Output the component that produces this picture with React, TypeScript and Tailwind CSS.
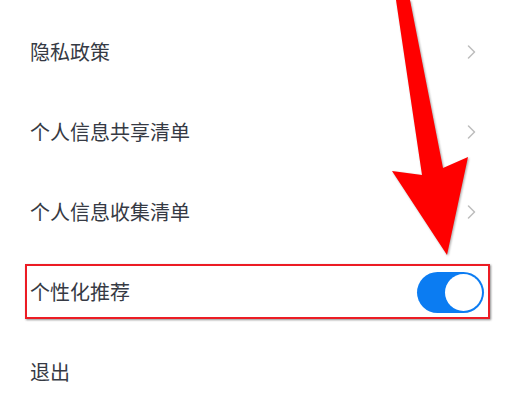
const ROWS = [
  { label: "隐私政策", kind: "link" },
  { label: "个人信息共享清单", kind: "link" },
  { label: "个人信息收集清单", kind: "link" },
  { label: "个性化推荐", kind: "toggle" },
  { label: "退出", kind: "plain" },
];

function Chevron() {
  return (
    <svg width="9" height="14" viewBox="0 0 9 14" fill="none">
      <polyline
        points="1.5,1 7.5,7 1.5,13"
        stroke="#bdbdbd"
        strokeWidth="1.5"
        strokeLinecap="round"
        strokeLinejoin="round"
      />
    </svg>
  );
}

function Toggle() {
  return (
    <div className="w-[67px] h-[41px] rounded-full bg-[#0b7cf2] flex items-center justify-end pr-[2px]">
      <div className="w-[37px] h-[37px] rounded-full bg-white" />
    </div>
  );
}

export default function App() {
  return (
    <div
      className="relative w-[517px] h-[393px] overflow-hidden bg-white"
      style={{ fontFamily: '"Noto Sans CJK SC", "Noto Sans", sans-serif' }}
    >
      <div className="flex flex-col pt-[12px]">
        {ROWS.map((row) => (
          <div
            key={row.label}
            className={
              row.kind === "toggle"
                ? "relative h-[80px] flex items-center justify-between pl-[30px] pr-[33px]"
                : "relative h-[80px] flex items-center justify-between pl-[30px] pr-[41px]"
            }
          >
            <span className="text-[20px] leading-none text-[#363a44]">{row.label}</span>
            {row.kind === "link" && <Chevron />}
            {row.kind === "toggle" && <Toggle />}
            {row.kind === "toggle" && (
              <div className="absolute left-[25px] right-[27px] top-[12px] h-[55px] border-2 border-[#ec1c24] shadow-[1px_1px_2px_rgba(0,0,0,0.45)]" />
            )}
          </div>
        ))}
      </div>

      {/* annotation arrow */}
      <svg
        className="absolute inset-0 drop-shadow-[1px_1px_1px_rgba(0,0,0,0.35)]"
        width="517"
        height="393"
        viewBox="0 0 517 393"
      >
        <polygon
          points="396,0 410,0 443,168 468,157 447,255 392,171 422,175"
          fill="#ff0000"
        />
      </svg>
    </div>
  );
}
